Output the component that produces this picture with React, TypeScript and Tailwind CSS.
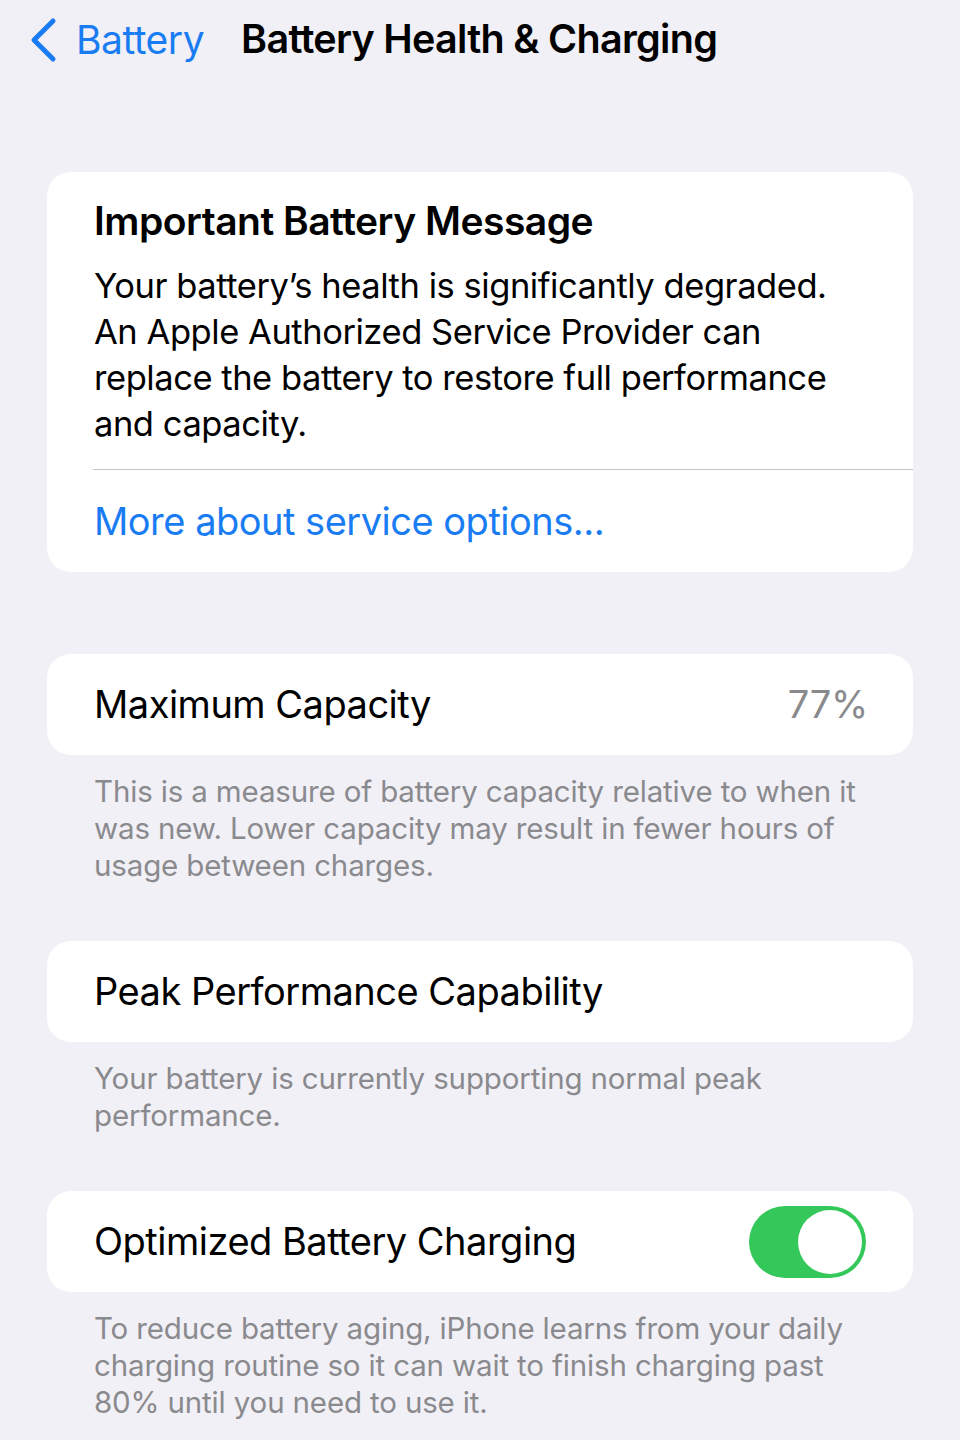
const font = { fontFamily: "Inter, 'Noto Sans', sans-serif" };

function Footer({ children }: { children: React.ReactNode }) {
  return (
    <p className="px-[47px] pt-[18px] text-[29.5px] leading-[37px] tracking-[-0.15px] text-[#8a8a8e]">{children}</p>
  );
}

function BackChevron() {
  return (
    <svg width="30" height="46" viewBox="0 0 30 46" fill="none">
      <path d="M25 4 L6 23 L25 42" stroke="currentColor" strokeWidth="5" strokeLinecap="round" strokeLinejoin="round" />
    </svg>
  );
}

export default function App() {
  return (
    <div style={font} className="flex min-h-[1440px] w-[960px] flex-col bg-[#f1f0f6] px-[47px]">
      <header className="-mx-[47px] flex h-[80px] items-center">
        <div className="flex items-center pl-[28px] text-[#1a7cf2]">
          <BackChevron />
          <span className="ml-[18px] text-[39px] tracking-[-0.5px]">Battery</span>
        </div>
        <h1 className="ml-[37px] text-[39.5px] font-semibold tracking-[-0.7px] text-black">Battery Health &amp; Charging</h1>
      </header>

      <section className="mt-[92px] rounded-[24px] bg-white">
        <div className="px-[47px] pt-[24px] pb-[22px]">
          <h2 className="text-[39px] font-semibold leading-[50px] tracking-[-0.5px] text-black">Important Battery Message</h2>
          <p className="mt-[17px] text-[34.5px] leading-[46px] tracking-[-0.45px] text-black">
            Your battery’s health is significantly degraded. An Apple Authorized Service Provider can replace the battery to restore full performance and capacity.
          </p>
        </div>
        <div className="ml-[46px] h-px bg-[#c6c6c8]" />
        <div className="px-[47px] py-[26px] text-[38px] leading-[50px] tracking-[-0.5px] text-[#1a7cf2]">More about service options...</div>
      </section>

      <section className="mt-[82px] flex h-[101px] items-center justify-between rounded-[24px] bg-white pl-[47px] pr-[45px]">
        <span className="text-[38px] tracking-[-0.5px] text-black">Maximum Capacity</span>
        <span className="text-[38px] tracking-[-0.3px] text-[#8a8a8e]">77%</span>
      </section>
      <Footer>This is a measure of battery capacity relative to when it was new. Lower capacity may result in fewer hours of usage between charges.</Footer>

      <section className="mt-[57px] flex h-[101px] items-center rounded-[24px] bg-white px-[47px]">
        <span className="text-[38px] tracking-[-0.5px] text-black">Peak Performance Capability</span>
      </section>
      <Footer>Your battery is currently supporting normal peak performance.</Footer>

      <section className="mt-[57px] flex h-[101px] items-center justify-between rounded-[24px] bg-white px-[47px]">
        <span className="text-[38px] tracking-[-0.5px] text-black">Optimized Battery Charging</span>
        <div className="flex h-[72px] w-[117px] items-center justify-end rounded-full bg-[#34c759] p-[4px]">
          <div className="h-[64px] w-[64px] rounded-full bg-white" />
        </div>
      </section>
      <Footer>To reduce battery aging, iPhone learns from your daily charging routine so it can wait to finish charging past 80% until you need to use it.</Footer>
    </div>
  );
}
